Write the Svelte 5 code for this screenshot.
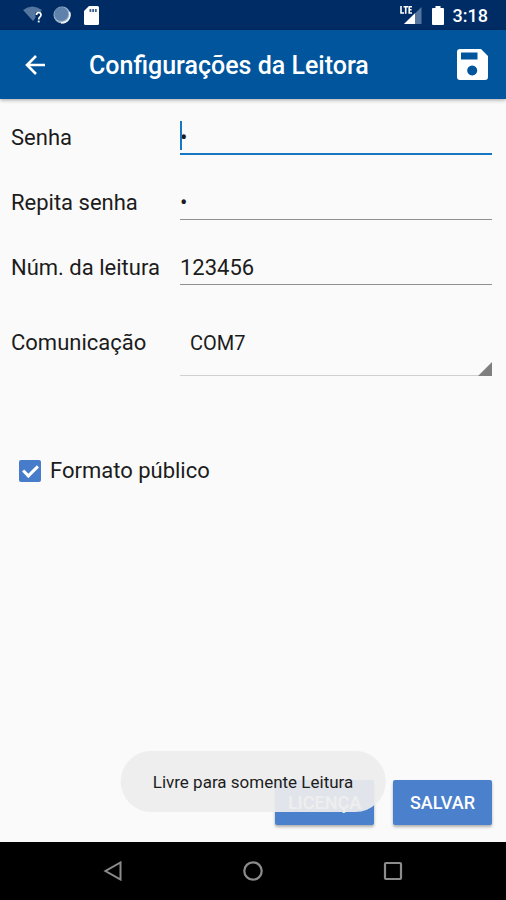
<script>
let senha = "1"
let repita = "1"
let leitura = "123456"
let porta = "COM7"
let publico = true
let portas = ["COM7"]
</script>

<div class="screen">
  <div class="status">
    <svg width="20" height="18" viewBox="0 0 20 18">
      <path d="M0 4 Q9 -3 19 4 L10 15 Z" fill="#54769f" />
      <path d="M12.500 6 h8 v12 h-8z" fill="#002c66" />
      <path d="M13.500 9 Q13.500 6.500 15.700 6.500 Q18 6.500 18 9 C18 11 15.700 11 15.700 13.500" fill="none" stroke="#fff" stroke-width="1.700" />
      <rect x="14.800" y="14.600" width="1.800" height="1.800" fill="#fff" />
    </svg>
    <svg class="sync" width="18" height="18" viewBox="0 0 18 18">
      <circle cx="9" cy="9" r="8.500" fill="#9db3cc" />
      <circle cx="8.300" cy="8" r="7" fill="#5f82ad" />
      <path d="M16.400 6 A8 8 0 0 1 8 16.700" fill="none" stroke="#f0f4f8" stroke-width="1.600" />
    </svg>
    <svg width="15" height="19" viewBox="0 0 15 19">
      <path d="M5 0 H13.500 Q15 0 15 1.500 V17.500 Q15 19 13.500 19 H1.500 Q0 19 0 17.500 V5 Z" fill="#fff" />
      <path d="M5.500 3h1.800v3H5.500z M8.200 3h1.800v3H8.200z M10.900 3h1.800v3H10.900z" fill="#3c5f8d" />
    </svg>
    <span class="space"></span>
    <svg width="22" height="20" viewBox="0 0 22 20">
      <path d="M21.500 2 V19 H4 Z" fill="#54769f" />
      <path d="M15 8.300 V19 H4 Z" fill="#fff" />
      <path d="M1 1 V8 H4 M3.500 1.700 H8 M5.700 1.700 V8.700 M12 1.700 H9.200 V8 H12 M9 4.800 H11.600" fill="none" stroke="#fff" stroke-width="1.600" />
    </svg>
    <svg width="12" height="19" viewBox="0 0 12 19">
      <path d="M3.500 0h5v2H11q1 0 1 1v15q0 1-1 1H1q-1 0-1-1V3q0-1 1-1h2.500z" fill="#fff" />
    </svg>
    <span class="time">3:18</span>
  </div>

  <header>
    <button class="icon" aria-label="Voltar">
      <svg width="20" height="20" viewBox="0 0 20 20">
        <path d="M20 10 H2 M11 1 L2 10 L11 19" fill="none" stroke="#fff" stroke-width="2.600" />
      </svg>
    </button>
    <h1>Configurações da Leitora</h1>
    <button class="icon" aria-label="Gravar">
      <svg width="31" height="31" viewBox="0 0 31 31">
        <path fill-rule="evenodd" fill="#fff" d="M3 0 H24 L31 7 V28 Q31 31 28 31 H3 Q0 31 0 28 V3 Q0 0 3 0 Z M4 3.500 V10.500 H20.500 V3.500 Z M15.200 16.500 a5 5 0 1 0 0.010 0 Z" />
      </svg>
    </button>
  </header>

  <main>
    <div class="fields">
      <label for="senha">Senha</label>
      <div class="box">
        <input id="senha" class="active" type="password" bind:value={senha} />
        <span class="caret"></span>
      </div>

      <label for="repita">Repita senha</label>
      <input id="repita" type="password" bind:value={repita} />

      <label for="leitura">Núm. da leitura</label>
      <input id="leitura" type="text" bind:value={leitura} />

      <label class="tall" for="porta">Comunicação</label>
      <div class="box">
        <select id="porta" bind:value={porta}>
          {#each portas as item}
          <option value={item}>{item}</option>
          {/each}
        </select>
        <svg class="corner" width="14" height="14" viewBox="0 0 14 14">
          <path d="M14 0 V14 H0 Z" fill="#7f7f7f" />
        </svg>
      </div>
    </div>

    <label class="check">
      <input type="checkbox" bind:checked={publico} />
      Formato público
    </label>

    <div class="actions">
      <button class="btn">LICENÇA</button>
      <button class="btn">SALVAR</button>
    </div>
    <div class="toast" role="status">Livre para somente Leitura</div>
  </main>

  <nav>
    <button class="icon" aria-label="Anterior">
      <svg width="20" height="20" viewBox="0 0 20 20">
        <path d="M17.500 1.500 V18.500 L2.500 10 Z" fill="none" stroke="#8c8c8c" stroke-width="2" />
      </svg>
    </button>
    <button class="icon" aria-label="Início">
      <svg width="20" height="20" viewBox="0 0 20 20">
        <circle cx="10" cy="10" r="8.700" fill="none" stroke="#8c8c8c" stroke-width="2.200" />
      </svg>
    </button>
    <button class="icon" aria-label="Recentes">
      <svg width="20" height="20" viewBox="0 0 20 20">
        <rect x="2" y="2" width="16" height="16" rx="1" fill="none" stroke="#8c8c8c" stroke-width="2.200" />
      </svg>
    </button>
  </nav>
</div>

<style>
:global(body) {
  margin: 0;
  background: #fafafa;
}
.screen {
  display: flex;
  flex-direction: column;
  min-height: 100vh;
  font-family: Roboto, "Liberation Sans", sans-serif;
  font-size: 22px;
  color: #1c1c1c;
}
svg {
  display: block;
  flex: none;
}
button, input, select {
  font: inherit;
  color: inherit;
  margin: 0;
  box-sizing: border-box;
}
.icon {
  background: none;
  border: none;
  padding: 0;
}
.status {
  display: flex;
  align-items: center;
  gap: 10px;
  height: 30px;
  padding: 0 18px 0 23px;
  background: #002c66;
  color: #fff;
}
.sync {
  margin-right: 3px;
}
.space {
  flex: 1;
}
.time {
  font-size: 18px;
  font-weight: 500;
  margin-left: -1px;
}
header {
  display: flex;
  align-items: center;
  height: 69px;
  padding: 0 18px 0 25px;
  background: #00559c;
  box-shadow: 0 1px 4px rgba(0, 0, 0, 0.35);
}
h1 {
  flex: 1;
  margin: 0 0 0 44px;
  padding-top: 2px;
  font-size: 25px;
  font-weight: 500;
  color: #fff;
}

main {
  position: relative;
  flex: 1;
  display: flex;
  flex-direction: column;
  padding: 9px 14px 17px 11px;
}
.fields {
  display: grid;
  grid-template-columns: 169px 1fr;
  row-gap: 18px;
}
.fields label {
  padding-top: 17px;
  line-height: 26px;
}
.fields .tall {
  padding-top: 27px;
}
.box {
  position: relative;
}
.fields input {
  display: block;
  width: 100%;
  height: 47px;
  padding: 13px 0 0;
  border: none;
  border-bottom: 1px solid #8f8f8f;
  border-radius: 0;
  background: none;
  outline: none;
}
.fields .active {
  border-bottom: 2px solid #1976c0;
}
.caret {
  position: absolute;
  left: 0;
  top: 13px;
  width: 2px;
  height: 29px;
  background: #1976c0;
}
select {
  display: block;
  appearance: none;
  width: 100%;
  height: 73px;
  padding: 8px 10px 0;
  border: none;
  border-bottom: 1px solid #d0d0d0;
  border-radius: 0;
  background: none;
  font-size: 20px;
  outline: none;
}
.corner {
  position: absolute;
  right: 0;
  bottom: 0;
  pointer-events: none;
}

.check {
  display: flex;
  align-items: center;
  gap: 9px;
  margin: 82px 0 0 8px;
  line-height: 26px;
}
.check input {
  appearance: none;
  width: 22px;
  height: 22px;
  border: 2px solid #757575;
  border-radius: 2px;
}
.check input:checked {
  display: grid;
  place-items: center;
  border: none;
  background: #467cca;
}
.check input:checked::after {
  content: "";
  width: 6px;
  height: 12px;
  margin-bottom: 4px;
  border: solid #fff;
  border-width: 0 3px 3px 0;
  transform: rotate(45deg);
}

.actions {
  display: flex;
  justify-content: flex-end;
  gap: 19px;
  margin-top: auto;
}
.btn {
  width: 99px;
  height: 45px;
  padding: 0;
  border: none;
  border-radius: 2px;
  background: #4a80cc;
  box-shadow: 0 2px 3px rgba(0, 0, 0, 0.3);
  color: #fff;
  font-size: 18px;
  font-weight: 500;
}
.toast {
  position: absolute;
  left: 50%;
  bottom: 30px;
  transform: translateX(-50%);
  padding: 2px 32px 0;
  border-radius: 31px;
  background: rgba(237, 237, 237, 0.93);
  font-size: 17px;
  line-height: 59px;
  white-space: nowrap;
}

nav {
  display: flex;
  justify-content: center;
  align-items: center;
  gap: 120px;
  height: 58px;
  background: #000;
}
</style>
